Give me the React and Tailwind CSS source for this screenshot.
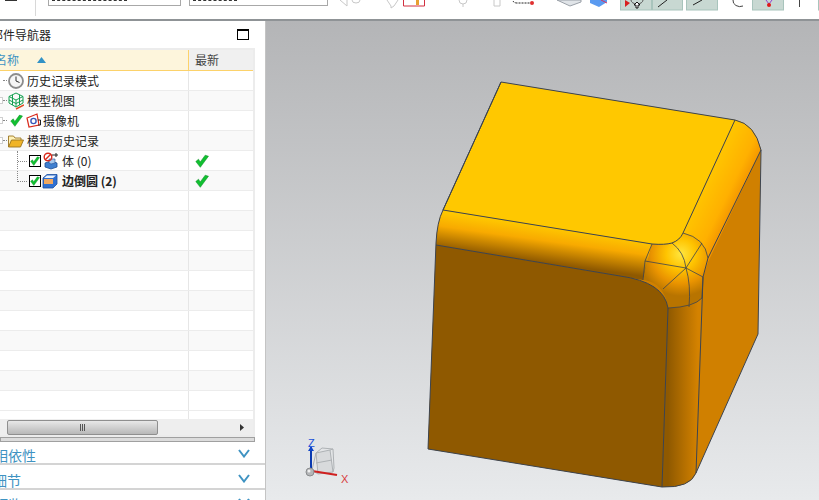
const rows = [
  { label: "历史记录模式", icon: "clock" },
  { label: "模型视图", icon: "view", box: true },
  { label: "摄像机", icon: "camera", box: true, check: true },
  { label: "模型历史记录", icon: "folder", box: true },
  { label: "体 (0)", icon: "body", child: true, latest: true },
  { label: "边倒圆 (2)", icon: "blend", child: true, latest: true, bold: true, last: true },
];

function Check({ size = 14 }) {
  return (
    <svg width={size} height={size} viewBox="0 0 14 14" className="shrink-0">
      <path d="M0.8 7.5 L5.3 13.3 L13.5 2.2 L10.2 1.2 L5.2 8 L3.5 5.2 Z" fill="#10c030" stroke="#0a8a22" strokeWidth="0.5" />
    </svg>
  );
}

function RowIcon({ name }) {
  if (name === "clock") {
    return (
      <svg width="16" height="16" viewBox="0 0 16 16" className="shrink-0">
        <circle cx="8" cy="8" r="7" fill="#f6f6f6" stroke="#8c8c8c" strokeWidth="1.8" />
        <path d="M8 3.5 V8 L11.5 9.5" fill="none" stroke="#333" strokeWidth="1" />
      </svg>
    );
  }
  if (name === "view") {
    return (
      <svg width="16" height="18" viewBox="0 0 16 18" className="shrink-0">
        <path d="M8 1 L15 4.5 V11 L8 15 L1 11 V4.5 Z M1 4.5 L8 8 L15 4.5 M8 8 V15 M4.5 2.8 V13 M11.5 2.8 V13 M1 8 L8 11.5 L15 8" fill="none" stroke="#14a050" strokeWidth="1" />
        <path d="M8 17 L16 13" stroke="#e04a20" strokeWidth="1.4" />
      </svg>
    );
  }
  if (name === "camera") {
    return (
      <svg width="15" height="16" viewBox="0 0 15 16" className="shrink-0">
        <path d="M1 5 L11 1 L13 12 L3 14 Z" fill="#fff" stroke="#d92a1c" strokeWidth="1.2" />
        <circle cx="7.5" cy="8" r="2.6" fill="none" stroke="#3858b8" strokeWidth="1.4" />
        <path d="M12 7 H14.5 V12 H12" fill="none" stroke="#222" strokeWidth="1" />
      </svg>
    );
  }
  if (name === "folder") {
    return (
      <svg width="16" height="14" viewBox="0 0 16 14" className="shrink-0">
        <path d="M0.5 13 V2 H5.5 L7 4 H13 V6" fill="#fff2b8" stroke="#9a7420" strokeWidth="0.9" />
        <path d="M0.5 13 L3.5 6 H15.5 L12.5 13 Z" fill="#f0b428" stroke="#9a7420" strokeWidth="0.9" />
      </svg>
    );
  }
  if (name === "body") {
    return (
      <svg width="18" height="18" viewBox="0 0 18 18" className="shrink-0">
        <path d="M3 11 L9 9 L15 11 V15 L9 17 L3 15 Z" fill="#3f7fd0" stroke="#1f4f96" strokeWidth="0.8" />
        <path d="M7 7 H13 V11 L9 12 L7 11 Z" fill="#a8c8ec" stroke="#1f4f96" strokeWidth="0.6" />
        <circle cx="6" cy="5" r="3.8" fill="none" stroke="#d92a1c" strokeWidth="1.4" />
        <path d="M3 8 L9 2" stroke="#d92a1c" strokeWidth="1.4" />
        <path d="M10 3 H16 M14 1 V5" stroke="#222" strokeWidth="1" />
      </svg>
    );
  }
  return (
    <svg width="16" height="16" viewBox="0 0 16 16" className="shrink-0">
      <path d="M1 5 L5 1.5 H15 V11 L11 15 H1 Z" fill="#2f6fd0" stroke="#1d4f9e" strokeWidth="0.8" />
      <path d="M2 6 H11 V11 H2 Z" fill="#f0a860" />
      <path d="M2 5 L5 2.5 H14 L11 5 Z" fill="#eaf2fb" />
    </svg>
  );
}

function TreeRow({ row, shaded }) {
  return (
    <div className={`flex h-5 border-b border-[#ececec] ${shaded ? "bg-[#f9f9f9]" : "bg-white"}`}>
      <div className="relative flex w-[189px] items-center overflow-hidden border-r border-[#e6e6e6]">
        {row.child ? (
          <div className="flex items-center gap-px pl-[29px]">
            <span className="flex h-3 w-3 items-center justify-center border border-black bg-white">
              <Check size={10} />
            </span>
            <RowIcon name={row.icon} />
            <span className={`text-xs text-[#222] ${row.bold ? "ml-[3px] font-bold" : "ml-px"}`}>{row.label}</span>
          </div>
        ) : (
          <div className="flex items-center pl-2">
            {row.check && (
              <span className="-ml-px mr-[3px] pl-[3px]">
                <Check size={13} />
              </span>
            )}
            <RowIcon name={row.icon} />
            <span className={`text-xs text-[#222] ${row.check ? "ml-[2px]" : "ml-[3px]"}`}>{row.label}</span>
          </div>
        )}
        {row.box && <span className="absolute -left-1 top-[6px] h-[7px] w-[7px] border border-[#cfcfcf] bg-white" />}
        {!row.child && <span className="absolute left-[3px] top-[9px] w-1 border-t border-dotted border-[#888]" />}
        {row.child && <span className="absolute left-[18px] top-[10px] w-[9px] border-t border-dotted border-[#888]" />}
        {row.child && <span className={`absolute left-[17px] top-0 border-l border-dotted border-[#888] ${row.last ? "h-[11px]" : "h-5"}`} />}
      </div>
      <div className="flex flex-1 items-center pl-[6px]">{row.latest && <Check />}</div>
    </div>
  );
}

function Toolbar() {
  return (
    <div className="flex h-[21px] shrink-0 items-start overflow-hidden border-b-2 border-[#8f9396] bg-white">
      <div className="relative h-4 w-9 shrink-0 border-r border-[#d8d8d8]">
        <span className="absolute left-[5px] top-0 h-px w-3 bg-[#333]" />
      </div>
      <div className="ml-3 h-[6px] w-[133px] shrink-0 border border-t-0 border-[#a8a8a8] pl-[3px]">
        <div className="h-px w-[75px] border-t border-dashed border-[#333]" />
      </div>
      <div className="ml-[8px] h-[6px] w-[139px] shrink-0 border border-t-0 border-[#a8a8a8] pl-[3px]">
        <div className="h-px w-[44px] border-t border-dashed border-[#333]" />
      </div>
      <svg width="491" height="19" viewBox="328 0 491 19" className="shrink-0">
        <g fill="none" stroke="#c8c8c8" strokeWidth="1">
          <path d="M340 0 L347 6 V0 M352 0 a4 3 0 0 0 8 0" />
          <path d="M387 0 L391 6 V8 L394 6 L398 0" />
          <path d="M459 0 a4 4 0 0 0 8 0 M463 4 V7 M494 0 V6 H500 V0" />
        </g>
        <path d="M403.5 0 V6 H424.5 V0" fill="none" stroke="#d23040" strokeWidth="1" />
        <rect x="416" y="0" width="3" height="5" fill="#e8a030" />
        <path d="M513 1 Q514 3 517 3 H530" fill="none" stroke="#222" strokeWidth="1" strokeDasharray="2 1" />
        <circle cx="532" cy="3" r="2" fill="#e03030" />
        <path d="M557 0 L570 6 L581 2 V0 Z" fill="#e0e4e8" stroke="#9aa0a8" />
        <path d="M590 0 H607 V2 L599 7 L590 3 Z" fill="#5a9af0" />
        <path d="M601 0 L607 3" stroke="#d83060" />
        <g fill="#c8d8d2" stroke="#a8c4bc">
          <rect x="620.5" y="-2" width="31" height="12" />
          <rect x="652.5" y="-2" width="30" height="12" />
          <rect x="686.5" y="-2" width="31" height="12" />
          <rect x="752.5" y="-2" width="31" height="12" />
          <rect x="818.5" y="-2" width="4" height="12" />
        </g>
        <path d="M625 0 V7 L630 3 Z" fill="#d82020" />
        <path d="M631 0 a6 4 0 0 0 12 0" fill="none" stroke="#555" />
        <path d="M638 8 V5 H640 L637 2 L634 5 H636 V8 Z" fill="#fff" stroke="#000" strokeWidth="0.9" />
        <path d="M658 7 L667 0 M693 5 L702 0" stroke="#222" />
        <path d="M733 0 a7 6 0 0 0 10 6" fill="none" stroke="#444" />
        <path d="M766 0 L769 4 L772 0" fill="none" stroke="#9040d0" />
        <circle cx="769" cy="5" r="2" fill="#e01818" />
        <path d="M799.5 0 V7" stroke="#444" />
      </svg>
    </div>
  );
}

function Chevron() {
  return (
    <svg width="12" height="9" viewBox="0 0 12 9" className="-mt-1 shrink-0">
      <path d="M1 1 L6 7.5 L11 1" fill="none" stroke="#3f93c2" strokeWidth="2" />
    </svg>
  );
}

function Sidebar() {
  const empty = Array.from({ length: 11 });
  return (
    <div className="flex w-[266px] shrink-0 flex-col overflow-hidden border-r border-[#c4c4c4] bg-white">
      <div className="flex h-[27px] shrink-0 items-center justify-between pr-4">
        <span className="-ml-[9px] text-xs text-[#222]">部件导航器</span>
        <span className="h-[11px] w-[12px] border border-t-2 border-black" />
      </div>
      <div className="mr-[10px] border-2 border-l-0 border-[#ececec]">
        <div className="flex h-[21px] border-b border-[#fcd26a] bg-[#fdf5dc]">
          <div className="flex w-[189px] items-center border-r border-[#fcd26a]">
            <span className="-ml-[5px] text-xs text-[#3f93c2]">名称</span>
            <svg width="9" height="6" viewBox="0 0 9 6" className="ml-[18px]">
              <path d="M0 6 L4.5 0 L9 6 Z" fill="#3292c6" />
            </svg>
          </div>
          <div className="flex flex-1 items-center bg-[#f0f0f0] pl-[6px] text-xs text-[#444]">最新</div>
        </div>
        {rows.map((row, i) => (
          <TreeRow key={row.label} row={row} shaded={i % 2 === 1} />
        ))}
        {empty.map((_, i) => (
          <div key={i} className={`flex h-5 border-b border-[#ececec] ${i % 2 === 0 ? "bg-white" : "bg-[#f9f9f9]"}`}>
            <div className="w-[189px] border-r border-[#e6e6e6]" />
          </div>
        ))}
        <div className="flex h-2 bg-white">
          <div className="w-[189px] border-r border-[#e6e6e6]" />
        </div>
        <div className="flex h-4 items-center bg-[#eeeeee] pl-[7px] pr-[9px]">
          <div className="flex h-[15px] w-[151px] items-center justify-center gap-px rounded-[2px] border border-[#8f8f8f] bg-gradient-to-b from-[#e8e8e8] to-[#b8b8b8]">
            <span className="h-[7px] w-px bg-[#555]" />
            <span className="h-[7px] w-px bg-[#555]" />
            <span className="h-[7px] w-px bg-[#555]" />
          </div>
          <svg width="4" height="7" viewBox="0 0 4 7" className="ml-auto">
            <path d="M0 0 L4 3.5 L0 7 Z" fill="#333" />
          </svg>
        </div>
      </div>
      <div className="mr-[10px] h-[5px] shrink-0 border border-[#a0a0a0] bg-[#dcdcdc]" />
      <div className="flex h-[23px] shrink-0 items-start justify-between border-b-2 border-[#d4d4d4] pr-[15px] pt-[3px]">
        <div className="flex h-5 w-full items-center justify-between">
          <span className="-ml-[6px] text-sm leading-5 text-[#3f93c2]">相依性</span>
          <Chevron />
        </div>
      </div>
      <div className="flex h-[25px] shrink-0 items-start justify-between border-b-2 border-[#d4d4d4] pr-[15px] pt-[5px]">
        <div className="flex h-5 w-full items-center justify-between">
          <span className="-ml-[7px] text-sm leading-5 text-[#3f93c2]">细节</span>
          <Chevron />
        </div>
      </div>
      <div className="flex h-[24px] shrink-0 items-start justify-between pr-[15px] pt-1">
        <div className="flex h-5 w-full items-center justify-between">
          <span className="-ml-[6px] text-sm leading-5 text-[#3f93c2]">预览</span>
          <Chevron />
        </div>
      </div>
    </div>
  );
}

function Model() {
  const edge = { fill: "none", stroke: "#3c4450", strokeWidth: 1 };
  return (
    <svg viewBox="266 21 553 479" className="block h-full w-full">
      <defs>
        <linearGradient id="topFillet" gradientUnits="userSpaceOnUse" x1="545" y1="226" x2="540" y2="262">
          <stop offset="0" stopColor="#ffc800" />
          <stop offset="0.4" stopColor="#f8aa00" />
          <stop offset="1" stopColor="#8f5900" />
        </linearGradient>
        <linearGradient id="sideFillet" gradientUnits="userSpaceOnUse" x1="668" y1="400" x2="698" y2="400">
          <stop offset="0" stopColor="#8f5900" />
          <stop offset="1" stopColor="#d48200" />
        </linearGradient>
        <linearGradient id="rightFillet" gradientUnits="userSpaceOnUse" x1="705" y1="175" x2="752" y2="198">
          <stop offset="0" stopColor="#ffc800" />
          <stop offset="0.55" stopColor="#ffb000" />
          <stop offset="0.85" stopColor="#f08c00" />
          <stop offset="1" stopColor="#d48200" />
        </linearGradient>
        <radialGradient id="corner" gradientUnits="userSpaceOnUse" cx="681" cy="254" r="42">
          <stop offset="0" stopColor="#ffe640" />
          <stop offset="0.35" stopColor="#ffc400" />
          <stop offset="0.7" stopColor="#ea9400" />
          <stop offset="1" stopColor="#b87400" />
        </radialGradient>
      </defs>

      <path d="M501 82 L735 120 Q755 124 761 150 L758 334 L696 473 Q690 488 662 487 L428 449 L436 243 Q437 222 443 210 Z" fill="#d08000" />
      <path d="M443 210 L652 244 L643 280 L436 245 Q437 222 443 210 Z" fill="url(#topFillet)" />
      <path d="M735 120 Q755 124 761 150 L708 262 L703 277 L683 233 Z" fill="url(#rightFillet)" />
      <path d="M668 300 L702 298 L696 473 Q690 488 662 487 Z" fill="url(#sideFillet)" />
      <path d="M436 245 L620 276 Q664 282 668 308 L662 487 L428 449 Z" fill="#8f5900" />
      <path d="M652 244 Q665 245 672 243 Q680 240 683 233 Q705 238 708 258 L703 277 L702 298 Q694 307 668 308 Q664 282 643 280 Z" fill="url(#corner)" />
      <path d="M501 82 L735 120 L698 200 L686 227 Q683 240 672 243 Q665 245 652 244 L443 210 Z" fill="#ffc800" />

      <path d="M501 82 L735 120 Q755 124 761 150 L758 334 L696 473 Q690 488 662 487 L428 449 L436 243 Q437 222 443 210 Z" {...edge} />
      <path d="M443 210 L501 82 M443 210 L652 244 Q665 245 672 243 Q680 240 683 233 L735 120" {...edge} />
      <path d="M436 245 L620 276 Q664 282 668 308 L662 487" {...edge} />
      <path d="M761 150 L708 258 L703 277 L696 473" {...edge} />
      <path d="M652 244 L645 261 L643 280 M645 261 L686 268 L703 277 M686 268 L702 243 M686 268 L663 289 M672 243 Q684 252 686 268 Q691 285 689 307" {...edge} strokeWidth="0.8" />
      <path d="M683 233 Q705 238 708 258 M703 277 L702 298 Q694 307 668 308" {...edge} strokeWidth="0.8" />

      <path d="M316 453 L330 450 L333 472 L318 474 Z" fill="#d8dadc" stroke="#aeb2b5" />
      <path d="M316 453 L322 448 L333 449 L330 450 M333 449 L334 468 L333 472 M312 470 L318 474 M312 470 L316 453 M316 463 L332 460" fill="none" stroke="#aeb2b5" />
      <path d="M311 468 V447" stroke="#0a3ab0" strokeWidth="2" />
      <path d="M308 451 L311 446 L314 451 Z" fill="#1046c8" />
      <path d="M312 471 L337 475" stroke="#d02020" strokeWidth="2" />
      <circle cx="310" cy="472" r="4" fill="#b4b6b8" stroke="#8a8c8e" />
      <circle cx="309" cy="471" r="1.5" fill="#f0f0f0" />
      <text x="308" y="447" fontSize="11" fill="#1a50d8" fontFamily="Liberation Sans, sans-serif">Z</text>
      <text x="341" y="483" fontSize="11" fill="#d84040" fontFamily="Liberation Sans, sans-serif">X</text>
    </svg>
  );
}

export default function App() {
  return (
    <div className="flex h-[500px] w-[819px] flex-col overflow-hidden bg-white font-['Noto_Sans_CJK_SC',sans-serif]">
      <Toolbar />
      <div className="flex min-h-0 flex-1">
        <Sidebar />
        <div className="min-w-0 flex-1 bg-gradient-to-b from-[#b4b5b7] to-[#e8eaec]">
          <Model />
        </div>
      </div>
    </div>
  );
}
